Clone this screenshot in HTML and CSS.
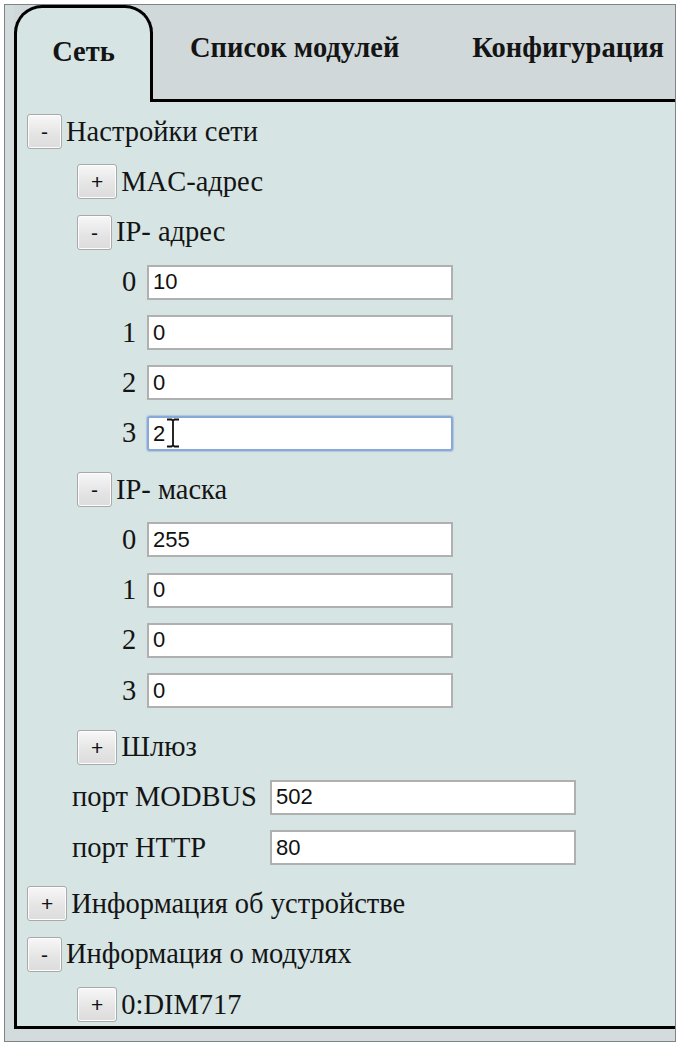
FILE: index.html
```html
<!DOCTYPE html>
<html lang="ru">
<head>
<meta charset="utf-8">
<title>Сеть</title>
<link rel="stylesheet" href="styles.css">
</head>
<body>
<div class="frame">
  <div class="tabs">
    <div class="tab active">Сеть</div>
    <div class="tab">Список модулей</div>
    <div class="tab">Конфигурация</div>
  </div>
  <div class="panel">
    <div class="tree">
      <div class="node"><button class="tg">-</button><span class="lbl">Настройки сети</span></div>
      <div class="group l1">
        <div class="node"><button class="tg">+</button><span class="lbl">MAC-адрес</span></div>
        <div class="node"><button class="tg">-</button><span class="lbl">IP- адрес</span></div>
        <div class="group l2">
          <div class="field"><span class="idx">0</span><input class="inp" type="text" value="10"></div>
          <div class="field"><span class="idx">1</span><input class="inp" type="text" value="0"></div>
          <div class="field"><span class="idx">2</span><input class="inp" type="text" value="0"></div>
          <div class="field"><span class="idx">3</span><span class="focuswrap"><input class="inp focus" type="text" value="2"><svg class="ibeam" width="14" height="30" viewBox="0 0 14 30"><path d="M1 1.5h4.5l1.5 1.2 1.5-1.2H13M7 2.7v24.6M1 28.5h4.5L7 27.3l1.5 1.2H13" fill="none" stroke="#fff" stroke-width="3.5"/><path d="M1 1.5h4.5l1.5 1.2 1.5-1.2H13M7 2.7v24.6M1 28.5h4.5L7 27.3l1.5 1.2H13" fill="none" stroke="#111" stroke-width="1.8"/></svg></span></div>
        </div>
        <div class="node"><button class="tg">-</button><span class="lbl">IP- маска</span></div>
        <div class="group l2">
          <div class="field"><span class="idx">0</span><input class="inp" type="text" value="255"></div>
          <div class="field"><span class="idx">1</span><input class="inp" type="text" value="0"></div>
          <div class="field"><span class="idx">2</span><input class="inp" type="text" value="0"></div>
          <div class="field"><span class="idx">3</span><input class="inp" type="text" value="0"></div>
        </div>
        <div class="node"><button class="tg">+</button><span class="lbl">Шлюз</span></div>
        <div class="field port"><span class="plbl">порт MODBUS</span><input class="inp" type="text" value="502"></div>
        <div class="field port"><span class="plbl">порт HTTP</span><input class="inp" type="text" value="80"></div>
      </div>
      <div class="node"><button class="tg">+</button><span class="lbl">Информация об устройстве</span></div>
      <div class="node"><button class="tg">-</button><span class="lbl">Информация о модулях</span></div>
      <div class="group l1 last">
        <div class="node"><button class="tg">+</button><span class="lbl">0:DIM717</span></div>
      </div>
    </div>
  </div>
</div>
</body>
</html>
```
FILE: styles.css
```css
html, body {
  margin: 0;
  padding: 0;
}
body {
  background: #ffffff;
  font-family: "Liberation Serif", "Times New Roman", serif;
  color: #141414;
}
.frame {
  margin: 4px;
  width: 661px;
  height: 1036px;
  padding-left: 9px;
  border: 1px solid #7e8485;
  background: #d3dbdc;
  overflow: hidden;
  display: flex;
  flex-direction: column;
}
.tabs {
  display: flex;
  align-items: flex-start;
  height: 94px;
  flex: none;
  background: #d0d8da;
}
.tab {
  flex: none;
  font-weight: bold;
  font-size: 28.5px;
  line-height: 30px;
  padding: 28px 36px 0 37px;
  white-space: nowrap;
}
.tab.active {
  position: relative;
  z-index: 1;
  box-sizing: border-box;
  width: 139px;
  height: 97px;
  margin-bottom: -3px;
  padding: 29px 0 0;
  text-align: center;
  border: 3px solid #000;
  border-bottom: 0;
  border-radius: 28px 28px 0 0;
  background: #d6e4e4;
}
.panel {
  flex: none;
  box-sizing: border-box;
  height: 930px;
  width: 700px;
  border: 3px solid #000;
  border-right: 0;
  background: #d6e4e4;
  padding: 12px 0 0 10px;
}
.tree, .group {
  display: flex;
  flex-direction: column;
  gap: 15.3px;
}
.group {
  margin-bottom: 6px;
}
.group.last {
  margin-bottom: 0;
}
.node, .field {
  display: flex;
  align-items: center;
  height: 35px;
  font-size: 28.5px;
}
.l1 { margin-left: 50px; }
.l2 { margin-left: 45px; }
.port { margin-left: -5px; }
.tg {
  box-sizing: border-box;
  height: 35px;
  padding: 0 13px;
  margin: 0 4px 0 0;
  font-family: "Liberation Sans", Arial, sans-serif;
  font-size: 21px;
  line-height: 1;
  color: #111;
  border: 1px solid #a9a9a9;
  border-radius: 3px;
  background: linear-gradient(#f7f7f7, #e4e4e4 60%, #dcdcdc);
  box-shadow: inset 0 0 0 1px #fdfdfd;
}
.lbl {
  white-space: nowrap;
}
.idx {
  width: 25px;
  flex: none;
}
.plbl {
  width: 198px;
  flex: none;
  white-space: nowrap;
}
.inp {
  box-sizing: border-box;
  width: 306px;
  height: 35px;
  margin: 0;
  padding: 0 4px;
  border: 2px solid #b0b0b0;
  background: #fff;
  font-family: "Liberation Sans", Arial, sans-serif;
  font-size: 22px;
  color: #111;
  outline: none;
}
.focuswrap {
  position: relative;
  display: block;
}
.inp.focus {
  border-color: #88a9d8;
  border-radius: 3px;
  box-shadow: 0 0 1px 1px rgba(136, 169, 216, 0.5);
}
.ibeam {
  position: absolute;
  left: 19px;
  top: 2px;
}
```
